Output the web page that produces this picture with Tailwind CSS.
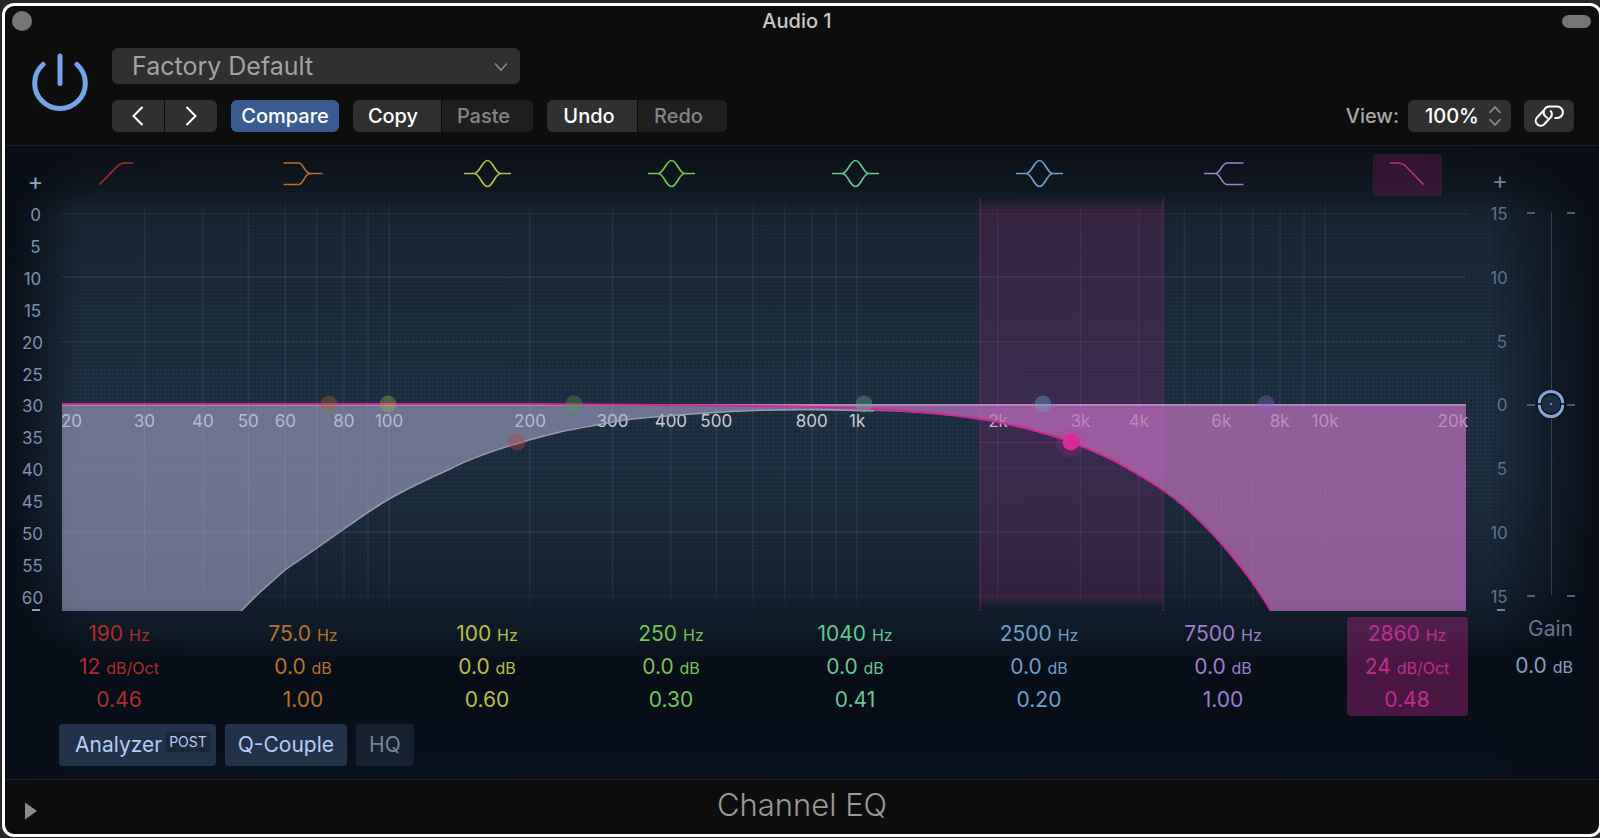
<!DOCTYPE html>
<html lang="en">
<head>
    <meta charset="UTF-8">
    <meta name="viewport" content="width=device-width, initial-scale=1.0">
    <title>Channel EQ - Audio 1</title>
    <script src="https://cdn.jsdelivr.net/npm/@tailwindcss/browser@4"></script>
</head>
<body class="bg-[#282828] font-['Inter','Liberation_Sans',sans-serif] overflow-hidden">
    <div class="h-screen pt-[3px] pb-px pl-0.5 -mr-0.5">
        <main class="h-full flex flex-col border-3 border-white rounded-xl bg-[#0d0d0d] overflow-hidden">

            <!-- Title bar -->
            <header class="h-8 shrink-0 flex items-center pl-[7px] pr-2 pb-0.5">
                <button aria-label="Close" class="size-5 rounded-full bg-[#757575]"></button>
                <h1 class="flex-1 text-center text-[20px] leading-7 font-medium text-[#c8c8c8]">Audio 1</h1>
                <button aria-label="Minimize" class="w-[29px] h-[13px] rounded-full bg-[#757575]"></button>
            </header>

            <!-- Toolbar -->
            <div class="shrink-0 flex pt-2.5 pb-[13px] pl-[27px] pr-[25px]">
                <button aria-label="Power" class="self-start mt-[5px] mr-[23px]">
                    <svg class="w-[57px] h-[59px]" viewBox="0 0 57 59" fill="none" stroke="#74a3e8" stroke-width="5" stroke-linecap="round">
                        <path d="M45 11.5A25.3 25.3 0 1 1 11 11.5"/>
                        <path d="M28 3V30.5"/>
                    </svg>
                </button>
                <div class="flex flex-col gap-4">
                    <div class="relative w-[408px]">
                        <select aria-label="Preset" class="appearance-none w-full h-9 rounded-md bg-[#303030] pl-5 text-[25px] leading-9 text-[#a3a3a3]">
                            <option>Factory Default</option>
                        </select>
                        <svg class="absolute right-3 top-3.5 w-3.5 h-2.5 pointer-events-none" viewBox="0 0 14 10" fill="none" stroke="#8a8a8a" stroke-width="1.6"><path d="M1 1.5L7 8L13 1.5"/></svg>
                    </div>
                    <div class="flex text-[20px] leading-8 font-medium text-white">
                        <div class="flex gap-px rounded-md overflow-hidden mr-[14px]">
                            <button aria-label="Previous" class="w-[52px] h-8 bg-[#303030] flex items-center justify-center">
                                <svg class="w-3 h-5" viewBox="0 0 12 20" fill="none" stroke="#fff" stroke-width="2"><path d="M10.5 1L1.5 10L10.5 19"/></svg>
                            </button>
                            <button aria-label="Next" class="w-[52px] h-8 bg-[#303030] flex items-center justify-center">
                                <svg class="w-3 h-5" viewBox="0 0 12 20" fill="none" stroke="#fff" stroke-width="2"><path d="M1.5 1L10.5 10L1.5 19"/></svg>
                            </button>
                        </div>
                        <button class="w-[108px] h-8 rounded-md bg-[#3a5d91] mr-[14px]">Compare</button>
                        <div class="flex gap-px rounded-md overflow-hidden mr-[14px]">
                            <button class="w-[88px] h-8 bg-[#303030] pr-2">Copy</button>
                            <button class="w-[91px] h-8 bg-[#1e1e1e] text-[#858585] pr-2">Paste</button>
                        </div>
                        <div class="flex gap-px rounded-md overflow-hidden">
                            <button class="w-[90px] h-8 bg-[#303030] pr-1.5">Undo</button>
                            <button class="w-[89px] h-8 bg-[#1e1e1e] text-[#858585] pr-2">Redo</button>
                        </div>
                    </div>
                </div>
                <div class="ml-auto self-end flex items-center text-[20px] leading-8 font-medium">
                    <label for="view" class="text-[#a8a8a8] mr-[9px]">View:</label>
                    <div class="relative mr-[13px]">
                        <select id="view" class="appearance-none w-[103px] h-8 rounded-md bg-[#303030] pl-[17px] text-white">
                            <option>100%</option>
                        </select>
                        <svg class="absolute right-2.5 top-1.5 w-3 h-5 pointer-events-none" viewBox="0 0 12 20" fill="none" stroke="#8f8f8f" stroke-width="1.6"><path d="M0.5 7L6 1L11.5 7M0.5 13L6 19L11.5 13"/></svg>
                    </div>
                    <button aria-label="Link" class="w-[50px] h-8 rounded-md bg-[#303030] flex items-center justify-center">
                        <svg class="w-[30px] h-[22px]" viewBox="0 0 30 22" fill="none" stroke-width="2">
                            <path stroke="#fff" d="M20.5 13H23.2A5.7 5.7 0 0 0 23.2 1.6H15.5A5.7 5.7 0 0 0 11 11C11.8 12 12.8 12.6 14.2 12.9"/>
                            <path stroke="#303030" stroke-width="5" d="M15.5 13.5L16.8 11.9"/>
                            <path stroke="#fff" d="M9.5 5.7L3.2 12.2A4.9 4.9 0 0 0 10.2 19.2L16.7 12.3C18.5 10.3 18.2 7.2 16.2 5.5"/>
                        </svg>
                    </button>
                </div>
            </div>

            <!-- EQ panel -->
            <section class="relative isolate shrink-0 h-[635px] border-y border-[#152234] grid grid-cols-[57px_1fr_133px] grid-rows-[50px_415px_auto_1fr] bg-[linear-gradient(to_bottom,#0b1017_0px,#0f1720_40px,#182634_72px,#1c2d3f_180px,#1e3044_260px,#1d2e41_340px,#182738_410px,#132030_455px,#0f1a27_485px,#070d17_520px,#08101b_100%)]">
                <div class="absolute inset-x-0 top-0 h-[480px] -z-10 opacity-15 bg-[radial-gradient(circle,#000_1px,transparent_1px)] bg-[length:4px_4px]"></div>
                <div class="absolute inset-0 -z-10 bg-[linear-gradient(to_right,#080e17_0px,#080e17cc_20px,#080e1700_75px,#080e1700_calc(100%-110px),#080e17cc_calc(100%-24px),#080e17_100%)]"></div>
                <!-- dark corners -->
                <div class="absolute left-0 top-0 w-[180px] h-[120px] -z-10 bg-[radial-gradient(ellipse_at_bottom_right,transparent_55%,#090e15_100%)]"></div>
                <div class="absolute right-0 top-0 w-[180px] h-[120px] -z-10 bg-[radial-gradient(ellipse_at_bottom_left,transparent_55%,#090e15_100%)]"></div>
                <div class="absolute left-0 top-[380px] w-[180px] h-[140px] -z-10 bg-[radial-gradient(ellipse_at_top_right,transparent_55%,#070d17_100%)]"></div>
                <div class="absolute right-0 top-[380px] w-[180px] h-[140px] -z-10 bg-[radial-gradient(ellipse_at_top_left,transparent_55%,#070d17_100%)]"></div>

                <div class="col-start-1 row-start-1 flex items-end justify-center pl-1 pb-0.5 text-[24px] leading-6 text-[#8ba3c7]">+</div>
                <div id="filters" class="col-start-2 row-start-1 -ml-[35px] -mr-[33px] pt-2 grid grid-cols-8 justify-items-center"></div>
                <div class="col-start-3 row-start-1 flex items-end pl-[26px] pb-[3px] text-[24px] leading-6 text-[#6d83a3]">+</div>

                <div id="level-scale" class="relative col-start-1 row-start-2 flex flex-col justify-between items-center pt-[7px] pb-px pr-0.5 text-[17px] leading-6 text-[#7b91b3]"></div>

                <!-- Plot -->
                <div class="relative col-start-2 row-start-2">
                    <svg id="grid" class="absolute inset-0 size-full" viewBox="0 0 1404 415" preserveAspectRatio="none" fill="none">
                        <defs>
                            <linearGradient id="line-fade" gradientUnits="userSpaceOnUse" x1="0" y1="4" x2="0" y2="412">
                                <stop offset="0" stop-color="#9db4c8" stop-opacity="0"/>
                                <stop offset="0.06" stop-color="#9db4c8" stop-opacity="0.1"/>
                                <stop offset="0.94" stop-color="#9db4c8" stop-opacity="0.1"/>
                                <stop offset="1" stop-color="#9db4c8" stop-opacity="0"/>
                            </linearGradient>
                        </defs>
                        <path stroke="#9db4c8" stroke-opacity="0.07" stroke-width="1.5" d="M0 18H1404M0 145.5H1404M0 272H1404M0 400H1404"/>
                        <path stroke="#9db4c8" stroke-opacity="0.13" stroke-width="1.5" d="M0 81H1404M0 336H1404"/>
                    </svg>
                    <div id="freq-labels" class="text-[17px] leading-6 text-[#c9ccd6]"></div>
                    <svg class="absolute inset-0 size-full" viewBox="0 0 1404 415" preserveAspectRatio="none" fill="none">
                        <defs>
                            <linearGradient id="band" x1="0" y1="0" x2="0" y2="1">
                                <stop offset="0" stop-color="#c8208c" stop-opacity="0"/>
                                <stop offset="0.02" stop-color="#c8208c" stop-opacity="0.17"/>
                                <stop offset="0.97" stop-color="#c8208c" stop-opacity="0.17"/>
                                <stop offset="0.99" stop-color="#c8208c" stop-opacity="0"/>
                            </linearGradient>
                        </defs>
                        <!-- selected band -->
                        <rect x="918" y="3" width="183" height="412" fill="url(#band)"/>
                        <path stroke="#c8308c" stroke-opacity="0.3" stroke-width="1.5" d="M918 2V415M1101 2V415M918 246.5H1101"/>
                        <!-- summed response -->
                        <path fill="#adacd1" fill-opacity="0.56" d="M0 208H1404V415H1209L1192 388L1178 369L1161 349L1142 329L1123 311L1102 295L1077 279L1057 268L1023 251.5L1009 246L982 238L950 228.5L918 222.5C880 218 850 216 812 215C760 213.5 700 213.5 661 216C630 218 600 220 571 223C545 226.5 520 232 502 235C490 238 470 243 454 248C435 253 405 264 386 274C368 282 345 293 327 303C310 313 295 324 282 333L255 352L223 374L196 398L179 415H0Z"/>
                        <path stroke="#a3a3b4" stroke-opacity="0.9" stroke-width="1.5" d="M179 415L196 398L223 374L255 352L282 333C295 324 310 313 327 303C345 293 368 282 386 274C405 264 435 253 454 248C470 243 490 238 502 235C520 232 545 226.5 571 223C600 220 630 218 661 216C700 213.5 760 213.5 812 215"/>
                        <!-- low pass response -->
                        <path fill="#d035ad" fill-opacity="0.36" d="M478 208H1404V415H1209C1199 396 1189 382 1178 369C1162 344 1144 327 1123 309C1110 297 1098 289 1077 278C1060 267 1042 259 1023 251C1010 245 998 241 982 236.5C960 229 940 225 918 223C885 217 850 214.5 812 212.5C760 210.5 700 209.5 478 208Z"/>
                        <path stroke="#d9a8dc" stroke-opacity="0.5" stroke-width="2" d="M0 209H1404"/>
                        <path stroke="#d9259a" stroke-width="2" d="M0 208H478C700 209.5 760 210.5 812 213C850 215 885 218 918 223C940 226 960 231 982 237C998 241.5 1010 246 1023 251.5C1042 259 1060 268 1077 279C1098 291 1110 300 1123 311C1144 330 1162 349 1178 370C1189 384 1199 398 1209 415"/>
                    </svg>
                    <div id="points"></div>
                </div>

                <div class="col-start-3 row-start-2 flex">
                    <div id="gain-scale" class="relative w-[61px] flex flex-col justify-between items-center pt-1.5 pb-0.5 pl-[5px] text-[17px] leading-6 text-[#5f7390]"></div>
                    <div class="relative w-12 flex flex-col justify-between pt-4 pb-3.5">
                        <div class="absolute inset-y-0 left-1/2 w-px my-4 bg-[#8ba3c7]/30"></div>
                        <div class="flex justify-between"><i class="w-2 h-0.5 bg-[#4b5e79]"></i><i class="w-2 h-0.5 bg-[#4b5e79]"></i></div>
                        <div class="flex justify-between"><i class="w-2 h-0.5 bg-[#4b5e79]"></i><i class="w-2 h-0.5 bg-[#4b5e79]"></i></div>
                        <div class="flex justify-between"><i class="w-2 h-0.5 bg-[#4b5e79]"></i><i class="w-2 h-0.5 bg-[#4b5e79]"></i></div>
                        <svg class="absolute left-1/2 top-1/2 size-[30px] -translate-1/2" viewBox="0 0 30 30" fill="none">
                            <circle cx="15" cy="15" r="14.5" fill="#07090d"/>
                            <circle cx="15" cy="15" r="9.5" fill="#1e2d42"/>
                            <path stroke="#7fa5df" stroke-width="3" d="M3.2 14.2A11.8 11.8 0 0 1 26.8 14.2M3.2 15.8A11.8 11.8 0 0 0 26.8 15.8"/>
                            <circle cx="15" cy="15" r="1" fill="#8fb2e8"/>
                        </svg>
                        <input id="gain" type="range" min="-15" max="15" value="0" class="absolute inset-0 size-full opacity-0 [writing-mode:vertical-lr]">
                    </div>
                </div>

                <!-- Band values -->
                <div id="values" class="col-start-2 row-start-3 -ml-[35px] -mr-[33px] pt-1.5 grid grid-cols-8 justify-items-center"></div>
                <div class="col-start-3 row-start-3 flex flex-col items-end gap-[5px] pt-0.5 pr-[26px] text-[21px] leading-8">
                    <label for="gain" class="text-[#64748c]">Gain</label>
                    <output for="gain" class="text-[#8a9dbd]">0.0 <small class="text-[16px]">dB</small></output>
                </div>

                <div class="col-span-3 row-start-4 flex items-start gap-[9px] pl-[54px] pt-2 text-[21px] leading-[42px] text-[#b3cdf5]">
                    <button class="flex rounded-sm bg-[#22324b] h-[42px] pl-4 pr-1.5">Analyzer
                        <span class="mt-2 ml-1 h-5 rounded-xs bg-[#1b283b] px-[3px] text-[14px] leading-5">POST</span>
                    </button>
                    <button class="rounded-sm bg-[#22324b] h-[42px] px-[13px]">Q-Couple</button>
                    <button class="rounded-sm bg-[#152131] h-[42px] px-[13px] text-[#73839b]">HQ</button>
                </div>
            </section>

            <!-- Footer -->
            <footer class="flex-1 relative flex items-center justify-center pb-1">
                <button aria-label="Show extended parameters" class="absolute left-5 top-[22px]">
                    <svg class="w-3 h-[18px]" viewBox="0 0 12 18"><path fill="#8c8c8c" d="M0 0.5V17.5L12 9Z"/></svg>
                </button>
                <h2 class="text-[31px] leading-10 font-light text-[#999999]">Channel EQ</h2>
            </footer>
        </main>
    </div>

    <script>
        const bell = 'M11 19.5H21C27 19.5 29 6.5 34.5 6.5S42 19.5 48 19.5H58M21 19.5C27 19.5 29 32.5 34.5 32.5S42 19.5 48 19.5';

        const bands = [
            { name: 'Low cut', color: 'text-[#b02d2d]', freq: '190', gain: '12', unit: 'dB/Oct', q: '0.46', hz: 188, db: 246, dot: 'bg-[#b8404a]/40', icon: 'M14.5 30.5L32 12.5Q35.5 9 40 9H48' },
            { name: 'Low shelf', color: 'text-[#b8722c]', freq: '75.0', gain: '0.0', unit: 'dB', q: '1.00', hz: 74.5, db: 208, dot: 'bg-[#a5662f]/40', icon: 'M14.5 9H29.5C35 9 35 19.5 41.5 19.5H53.5M14.5 30.5H29.5C35 30.5 35 19.5 41.5 19.5' },
            { name: 'Peak 1', color: 'text-[#b9bf45]', freq: '100', gain: '0.0', unit: 'dB', q: '0.60', hz: 99.5, db: 208, dot: 'bg-[#a3a843]/40', icon: bell },
            { name: 'Peak 2', color: 'text-[#75c556]', freq: '250', gain: '0.0', unit: 'dB', q: '0.30', hz: 248, db: 208, dot: 'bg-[#4f9a46]/40', icon: bell },
            { name: 'Peak 3', color: 'text-[#65c892]', freq: '1040', gain: '0.0', unit: 'dB', q: '0.41', hz: 1034, db: 208, dot: 'bg-[#5aae86]/40', icon: bell },
            { name: 'Peak 4', color: 'text-[#6c9fcd]', freq: '2500', gain: '0.0', unit: 'dB', q: '0.20', hz: 2490, db: 208, dot: 'bg-[#6a9fce]/40', icon: bell },
            { name: 'High shelf', color: 'text-[#9d7fd0]', freq: '7500', gain: '0.0', unit: 'dB', q: '1.00', hz: 7470, db: 208, dot: 'bg-[#8c66c0]/40', icon: 'M15 19.5H26C32 19.5 32 9 38.5 9H54.5M26 19.5C32 19.5 32 30.5 38.5 30.5H54.5' },
            { name: 'High cut', color: 'text-[#bd2e8f]', freq: '2860', gain: '24', unit: 'dB/Oct', q: '0.48', hz: 2860, db: 246, dot: 'bg-[#d92a98] ring-[7px] ring-[#d92a98]/15', icon: 'M17 9H24.5Q29.5 9 33 12.5L50.5 30.5', selected: true }
        ];

        // log scale, 20 Hz - 20 kHz, in percent of the plot width
        const freqX = hz => Math.log10(hz / 20) / 3 * 100;

        document.getElementById('filters').innerHTML = bands.map(b => `
            <button aria-label="${b.name}" class="w-[69px] h-[42px] rounded-sm ${b.color} ${b.selected ? 'bg-[#c8208c]/20' : ''}">
                <svg class="w-[69px] h-[42px]" viewBox="0 0 69 42" fill="none" stroke="currentColor" stroke-width="1.7"><path d="${b.icon}"/></svg>
            </button>`).join('');

        document.getElementById('values').innerHTML = bands.map(b => `
            <div class="w-[121px] h-[99px] pt-px rounded-sm text-center text-[21px] leading-8 ${b.color} ${b.selected ? 'bg-[#c82896]/35' : ''}">
                <div>${b.freq} <small class="text-[16px]">Hz</small></div>
                <div>${b.gain} <small class="text-[16px]">${b.unit}</small></div>
                <div>${b.q}</div>
            </div>`).join('');

        document.getElementById('points').innerHTML = bands.map(b => `
            <div class="absolute size-[17px] rounded-full -translate-1/2 ${b.dot}" style="left:${freqX(b.hz)}%;top:${b.db / 4.15}%"></div>`).join('');

        const labels = [[20, '20'], [30, '30'], [40, '40'], [50, '50'], [60, '60'], [80, '80'], [100, '100'], [200, '200'], [300, '300'], [400, '400'], [500, '500'], [800, '800'], [1000, '1k'], [2000, '2k'], [3000, '3k'], [4000, '4k'], [6000, '6k'], [8000, '8k'], [10000, '10k'], [20000, '20k']];
        document.getElementById('freq-labels').innerHTML = labels.map(([hz, text]) => {
            if (hz === 20) return `<span class="absolute -left-px top-[213px]">${text}</span>`;
            if (hz === 20000) return `<span class="absolute -right-0.5 top-[213px]">${text}</span>`;
            return `<span class="absolute top-[213px] -translate-x-1/2" style="left:${freqX(hz)}%">${text}</span>`;
        }).join('');

        // vertical grid lines
        const steps = [];
        for (let d = 10; d <= 10000; d *= 10) {
            for (let n = 1; n < 10; n++) {
                if (d * n > 20 && d * n <= 10000) steps.push(d * n);
            }
        }
        document.getElementById('grid').innerHTML += steps.map(hz =>
            `<rect x="${(freqX(hz) * 14.04 - 0.75).toFixed(1)}" y="4" width="1.5" height="408" fill="url(#line-fade)"/>`).join('');

        document.getElementById('level-scale').innerHTML =
            [0, 5, 10, 15, 20, 25, 30, 35, 40, 45, 50, 55, 60].map(n => `<span class="h-6 ${n < 10 ? 'pl-1.5' : ''}">${n}</span>`).join('') +
            '<i class="absolute bottom-0 left-[27px] w-2 h-0.5 bg-[#8ba3c7]"></i>';
        document.getElementById('gain-scale').innerHTML =
            [15, 10, 5, 0, 5, 10, 15].map(n => `<span class="h-6 ${n < 10 ? 'pl-1.5' : ''}">${n}</span>`).join('') +
            '<i class="absolute bottom-0 left-[31px] w-2 h-0.5 bg-[#6d83a3]"></i>';
    </script>
</body>
</html>
